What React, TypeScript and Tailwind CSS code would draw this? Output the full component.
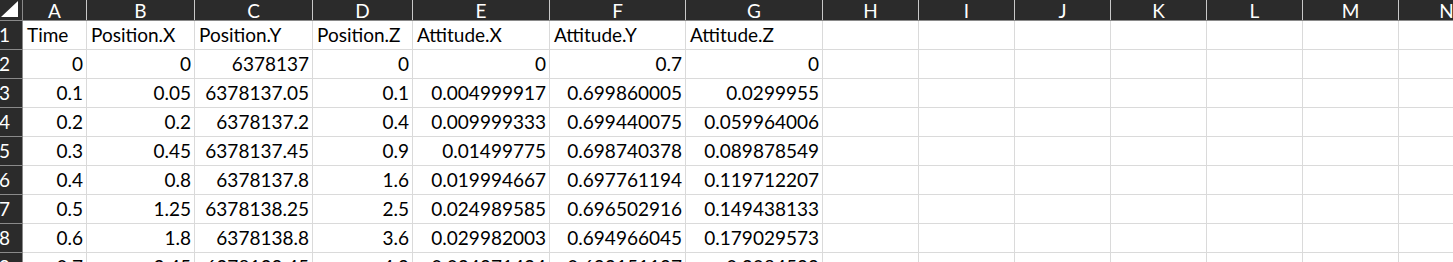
const columns = [
  { key: "A", width: 64 },
  { key: "B", width: 108 },
  { key: "C", width: 118 },
  { key: "D", width: 100 },
  { key: "E", width: 137 },
  { key: "F", width: 136 },
  { key: "G", width: 137 },
  { key: "H", width: 96 },
  { key: "I", width: 96 },
  { key: "J", width: 96 },
  { key: "K", width: 96 },
  { key: "L", width: 96 },
  { key: "M", width: 96 },
  { key: "N", width: 96 },
];

const headers = ["Time", "Position.X", "Position.Y", "Position.Z", "Attitude.X", "Attitude.Y", "Attitude.Z"];

const rows = [
  ["0", "0", "6378137", "0", "0", "0.7", "0"],
  ["0.1", "0.05", "6378137.05", "0.1", "0.004999917", "0.699860005", "0.0299955"],
  ["0.2", "0.2", "6378137.2", "0.4", "0.009999333", "0.699440075", "0.059964006"],
  ["0.3", "0.45", "6378137.45", "0.9", "0.01499775", "0.698740378", "0.089878549"],
  ["0.4", "0.8", "6378137.8", "1.6", "0.019994667", "0.697761194", "0.119712207"],
  ["0.5", "1.25", "6378138.25", "2.5", "0.024989585", "0.696502916", "0.149438133"],
  ["0.6", "1.8", "6378138.8", "3.6", "0.029982003", "0.694966045", "0.179029573"],
  ["0.7", "2.45", "6378139.45", "4.9", "0.034971424", "0.693151197", "0.2084599"],
];

function RowNumber({ n }: { n: number }) {
  return (
    <div className="w-[23px] h-[29px] shrink-0 bg-[#2b2b2b] border-r border-b border-r-[#8a8a8a] border-b-[#8a8a8a] flex items-end pb-[4px] overflow-hidden">
      <span className="ml-[-1px] text-white leading-[20px]">{n}</span>
    </div>
  );
}

function Cell({ value, width, right }: { value?: string; width: number; right?: boolean }) {
  return (
    <div
      className={`h-[29px] shrink-0 border-r border-b border-[#dadada] flex items-end pb-[4px] whitespace-nowrap overflow-hidden ${
        right ? "justify-end pr-[3px]" : "justify-start pl-[4px]"
      }`}
      style={{ width }}
    >
      <span className="leading-[20px]">{value}</span>
    </div>
  );
}

export default function App() {
  return (
    <div
      className="w-[1453px] h-[262px] overflow-hidden bg-white text-[19px] text-black"
      style={{ fontFamily: "Lato, 'Open Sans', sans-serif" }}
    >
      {/* column header bar */}
      <div className="flex h-[21px] bg-[#2b2b2b] border-b border-[#8a8a8a] w-max">
        <div className="w-[23px] shrink-0 border-r border-[#8a8a8a] flex items-start justify-start">
          <svg width="22" height="20" viewBox="0 0 22 20">
            <polygon points="1,17 18,17 18,1" fill="#ffffff" />
          </svg>
        </div>
        {columns.map((c) => (
          <div
            key={c.key}
            className="shrink-0 border-r border-[#c8c8c8] flex items-center justify-center text-white leading-[19px]"
            style={{ width: c.width }}
          >
            {c.key}
          </div>
        ))}
      </div>

      {/* row 1 - headings */}
      <div className="flex w-max">
        <RowNumber n={1} />
        {columns.map((c, i) => (
          <Cell key={c.key} width={c.width} value={headers[i]} />
        ))}
      </div>

      {rows.map((r, ri) => (
        <div key={ri} className="flex w-max">
          <RowNumber n={ri + 2} />
          {columns.map((c, i) => (
            <Cell key={c.key} width={c.width} value={r[i]} right />
          ))}
        </div>
      ))}
    </div>
  );
}
